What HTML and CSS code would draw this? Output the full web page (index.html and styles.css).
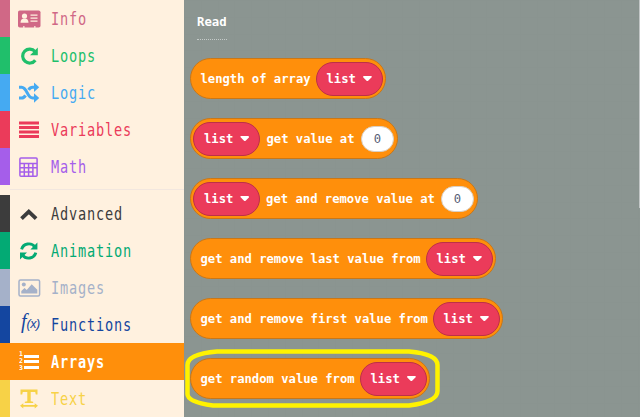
FILE: index.html
```html
<!DOCTYPE html>
<html lang="en">
<head>
<meta charset="utf-8">
<title>Arrays toolbox</title>
<link rel="stylesheet" href="styles.css">
</head>
<body>
<div class="editor">
  <nav class="toolbox">
    <div class="category info"><svg class="icon" viewBox="0 0 24 24"><rect x="1" y="3.5" width="22.5" height="17" rx="1.8" fill="currentColor"/><g fill="#fff1df"><circle cx="7.500" cy="9" r="2.600"/><path d="M3.500 15.800q0-4.300 4-4.300t4 4.300zM13.500 7.500h7v1.200h-7zM13.500 10.500h7v1.200h-7zM13.500 13.500h7v1.200h-7zM6 19.300h1.600v1.500H6zM17 19.300h1.600v1.500H17z"/></g></svg><span class="label">Info</span></div>
    <div class="category loops"><svg class="icon" viewBox="0 0 24 24"><path d="M18 7.500A7 7 0 1 0 18.300 16.200" fill="none" stroke="currentColor" stroke-width="3.200"/><path d="M20.800 3.500v7.800H13z" fill="currentColor"/></svg><span class="label">Loops</span></div>
    <div class="category logic"><svg class="icon" viewBox="0 0 24 24"><path d="M2 6.300h2.600c5.600 0 5.400 10.700 11 10.700h2M2 17h2.600c1.800 0 3-1.100 3.900-2.600M11.600 8.900c1-1.600 2.100-2.600 4-2.600h2" fill="none" stroke="currentColor" stroke-width="3.100"/><path d="M17 1.600l5.200 4.700-5.200 4.700zM17 12.300l5.200 4.700-5.200 4.700z" fill="currentColor"/></svg><span class="label">Logic</span></div>
    <div class="category variables"><svg class="icon" viewBox="0 0 24 24"><path d="M2 3.500h20v3H2zM2 8h20v3H2zM2 12.500h20v3H2zM2 17h20v3H2z" fill="currentColor"/></svg><span class="label">Variables</span></div>
    <div class="category math"><svg class="icon" viewBox="0 0 24 24"><g fill="none" stroke="currentColor" stroke-width="1.500"><rect x="2.900" y="2.900" width="17.200" height="18.400" rx="1"/><path d="M3 8.500h17M3 12.800h17M3 17h13M7.300 8.500v12.800M11.600 8.500v12.800M15.900 8.500v12.800"/></g></svg><span class="label">Math</span></div>
    <hr class="divider">
    <div class="category advanced"><svg class="icon" viewBox="0 0 24 24"><path d="M4.500 16.700l7.300-7 7.300 7" fill="none" stroke="currentColor" stroke-width="3.800"/></svg><span class="label">Advanced</span></div>
    <div class="category animation"><svg class="icon" viewBox="0 0 24 24"><path d="M4.600 10.300c1.500-6 9.800-7.300 13.200-2.500M18.800 13.700c-1.500 6-9.800 7.300-13.200 2.500" fill="none" stroke="currentColor" stroke-width="2.900"/><path d="M20.400 3.600v7h-7zM3 20.400v-7h7z" fill="currentColor"/></svg><span class="label">Animation</span></div>
    <div class="category images"><svg class="icon" viewBox="0 0 24 24"><rect x="2" y="4.100" width="20.600" height="15.800" rx="1.500" fill="none" stroke="currentColor" stroke-width="1.500"/><circle cx="6.800" cy="8.600" r="2" fill="currentColor"/><path d="M4.300 17.600v-2.500l3.300-3 2.100 1.900 5-5.800 5.600 5.600v3.800z" fill="currentColor"/></svg><span class="label">Images</span></div>
    <div class="category functions"><span class="icon fx"><i>f</i><small>(x)</small></span><span class="label">Functions</span></div>
    <div class="category arrays selected"><span class="icon ordered"><span class="digits"><b>1</b><b>2</b><b>3</b></span><span class="lines"></span></span><span class="label">Arrays</span></div>
    <div class="category text"><svg class="icon" viewBox="0 0 24 24"><path d="M3.500 2.500h17v5h-1.700l-.6-2.400h-4.500v9.200l2.500.5v1.300H7.800v-1.300l2.500-.5V5.100H5.800l-.6 2.400H3.500zM3 18.800l3.300-2.600v1.700h11.400v-1.700l3.300 2.600-3.300 2.600v-1.700H6.300v1.700z" fill="currentColor"/></svg><span class="label">Text</span></div>
  </nav>
  <main class="flyout">
    <h2 class="heading">Read</h2>
    <div class="blocks">
      <div class="block length"><span>length of array</span><span class="pill">list<i class="caret"></i></span></div>
      <div class="block get-at"><span class="pill">list<i class="caret"></i></span><span>get value at</span><span class="number">0</span></div>
      <div class="block remove-at"><span class="pill">list<i class="caret"></i></span><span>get and remove value at</span><span class="number">0</span></div>
      <div class="block last"><span>get and remove last value from</span><span class="pill">list<i class="caret"></i></span></div>
      <div class="block first"><span>get and remove first value from</span><span class="pill">list<i class="caret"></i></span></div>
      <div class="block random"><span>get random value from</span><span class="pill">list<i class="caret"></i></span>
        <svg class="highlight" viewBox="0 0 256 62"><path d="M32 3.500H224Q252.500 6 252.500 17V43Q252.500 54 224 57.500H28Q2.500 54 2.500 46V17Q2.500 6 32 3.500Z"/></svg>
      </div>
    </div>
    <div class="scrollbar"></div>
  </main>
</div>
</body>
</html>
```

FILE: styles.css
```css
* { box-sizing: border-box; }
body { margin: 0; overflow: hidden; }
.editor { display: flex; width: 640px; height: 417px; font-family: "DejaVu Sans Mono", monospace; }
.toolbox { width: 184px; flex: none; background: #fff1df; }
.category { height: 37px; display: flex; align-items: center; border-left: 10px solid currentColor; padding-left: 7px; }
.icon { width: 24px; height: 24px; flex: none; }
.label { margin-left: 10px; font-size: 17px; line-height: 20px; letter-spacing: 1px; white-space: nowrap; transform: scaleX(.8); transform-origin: left; }
.divider { height: 1px; margin: 4px 0 5px 10px; border: 0; background: #f2e7df; }
.info { color: #d06886; }
.loops { color: #20bf6b; }
.logic { color: #45aaf2; }
.variables { color: #eb3b5a; }
.math { color: #a55eea; }
.advanced { color: #3c3c3c; }
.animation { color: #03aa74; }
.images { color: #a5b1c9; }
.functions { color: #1446a0; }
.text { color: #f7d247; }
.selected { color: #fff; background: #ff8f0b; border-left-color: #ff8f0b; }
.selected .label { font-weight: bold; }
.fx { display: flex; align-items: baseline; padding-left: 4px; font-family: "Liberation Serif", serif; line-height: 17px; }
.fx i { font-size: 20px; }
.fx small { font-family: "Liberation Sans", sans-serif; font-style: italic; font-size: 12.500px; letter-spacing: -.5px; }
.ordered { display: flex; align-items: center; gap: 1px; padding-left: 2px; }
.digits { display: flex; flex-direction: column; font-size: 6.500px; line-height: 7px; }
.digits b { height: 7px; overflow: hidden; }
.lines { width: 15px; height: 14px; background: repeating-linear-gradient(#fff 0 3px, transparent 3px 5.500px); }
.flyout { position: relative; flex: 1; padding: 14px 0 0 6px; background-color: #8b9591; background-image: linear-gradient(90deg, #8a9490 1px, transparent 1px), linear-gradient(#8a9490 1px, transparent 1px); background-size: 16.800px 16.800px; }
.heading { width: 30px; height: 26px; margin: 0 0 18px 7px; border-bottom: 1px dotted #c5cbc9; color: #fff; font-size: 12.300px; line-height: 17px; }
.blocks { display: flex; flex-direction: column; gap: 19px; }
.block { position: relative; display: flex; align-items: center; justify-content: space-between; height: 41px; padding: 0 2.500px 0 9.500px; border: 1px solid #c97718; border-radius: 21px; background: #ff8f0b; color: #fff; font-size: 12.200px; font-weight: bold; white-space: nowrap; }
.length { width: 196px; }
.get-at { width: 208px; padding: 0 3px 0 2px; }
.remove-at { width: 288px; padding: 0 3px 0 2px; }
.last { width: 306px; }
.first { width: 313px; }
.random { width: 240px; }
.pill { display: flex; align-items: center; gap: 7px; width: 67px; height: 34px; padding: 0 0 0 10px; border: 1px solid #bc3048; border-radius: 17px; background: #eb3b5a; }
.caret { width: 9px; height: 5px; border-radius: 1px; background: #fff; clip-path: polygon(0 0, 100% 0, 100% 20%, 56% 100%, 44% 100%, 0 20%); }
.number { width: 33px; height: 26px; border: 1px solid #d8cfc4; border-radius: 13px; background: #fff; color: #575e75; font-weight: normal; line-height: 24px; text-align: center; }
.highlight { position: absolute; left: -6px; top: -11px; width: 256px; height: 62px; }
.highlight path { fill: none; stroke: #fff200; stroke-width: 4.500px; }
.scrollbar { position: absolute; top: 0; right: 0; width: 1px; height: 208px; background: #c2c6c6; }
```
